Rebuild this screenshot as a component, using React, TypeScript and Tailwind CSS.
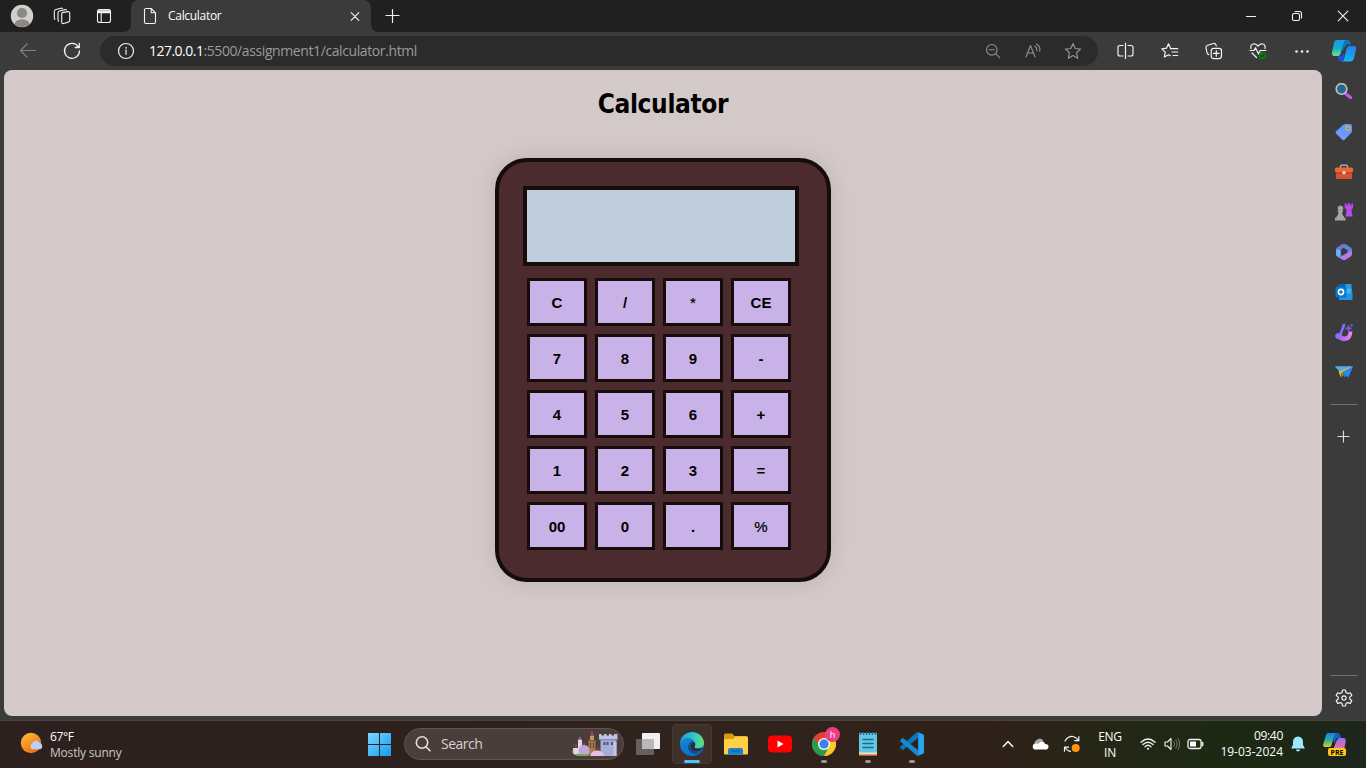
import React from 'react';

type Kids = { children?: React.ReactNode };

function Line({ children, w = 16, h = 16, color = '#f2f2f2', sw = 1.1 }: Kids & { w?: number; h?: number; color?: string; sw?: number }) {
  return (
    <svg width={w} height={h} viewBox={`0 0 ${w} ${h}`} fill="none" stroke={color} strokeWidth={sw} strokeLinecap="round" strokeLinejoin="round" className="block shrink-0">
      {children}
    </svg>
  );
}

function Pic({ children, s = 24 }: Kids & { s?: number }) {
  return (
    <svg width={s} height={s} viewBox={`0 0 ${s} ${s}`} className="block shrink-0">
      {children}
    </svg>
  );
}

const Slot44 = ({ children }: Kids) => <div className="flex h-full w-11 shrink-0 items-center justify-center">{children}</div>;
const Slot46 = ({ children }: Kids) => <div className="flex h-full w-[46px] shrink-0 items-center justify-center">{children}</div>;
const Slot40 = ({ children }: Kids) => <div className="flex h-full w-10 shrink-0 items-center justify-center">{children}</div>;
const SideSlot = ({ children }: Kids) => <div className="flex h-10 w-11 items-center justify-center">{children}</div>;

function TitleBar() {
  return (
    <div className="flex h-8 bg-[#202020]">
      <div className="flex w-11 items-center justify-center">
        <Pic s={24}>
          <defs><clipPath id="av"><circle cx="12" cy="12" r="11" /></clipPath></defs>
          <circle cx="12" cy="12" r="11.2" fill="#d2d0cc" />
          <g clipPath="url(#av)" fill="#8c8884"><circle cx="12" cy="9" r="5.1" /><ellipse cx="12" cy="20.5" rx="7.6" ry="5.3" /></g>
        </Pic>
      </div>
      <div className="flex w-9 items-center justify-center">
        <Line w={18} h={18}>
          <path d="M9.300 5.600 15 4.600q1.700-.200 1.700 1.500v7.200q0 1.500-1.400 1.800l-4.800 1.400q-1.800.500-1.800-1.400V7.200q0-1.300.600-1.600z" />
          <path d="M5.700 14.200q-.700-.500-.700-1.600V6q0-1.600 1.500-2L12 2.600q1-.200 1.500.300" />
          <path d="M2 12.300q-.700-.500-.700-1.600V4.500q0-1.600 1.500-2L8 1.200q1-.200 1.500.200" />
        </Line>
      </div>
      <div className="flex w-12 items-center justify-center">
        <Line w={16} h={16}>
          <rect x="1.5" y="1.5" width="13" height="13" rx="2" />
          <path d="M2 3.2h12M2 4.2h12" strokeWidth="2" /><path d="M5.2 5v9.3" />
        </Line>
      </div>
      <div className="relative ml-[3px] flex w-60 items-center rounded-t-lg bg-[#3b3b3b]">
        <svg className="absolute bottom-0 -left-2" width="8" height="8"><path d="M0 8Q8 8 8 0v8z" fill="#3b3b3b" /></svg>
        <svg className="absolute -right-2 bottom-0" width="8" height="8"><path d="M8 8Q0 8 0 0v8z" fill="#3b3b3b" /></svg>
        <div className="ml-3">
          <Line w={14} h={18}><path d="M3 1.5h5.2l4.3 4.3V15Q12.5 16.5 11 16.5H3Q1.5 16.5 1.5 15V3Q1.5 1.5 3 1.5zM8.2 1.5V5.8h4.3" /></Line>
        </div>
        <span className="ml-[11px] text-[12px] leading-4 tracking-[-0.3px] text-white">Calculator</span>
        <div className="mr-[11px] ml-auto"><Line w={10} h={10}><path d="m1.2 1.7 7.6 7.6m0-7.6-7.6 7.6" /></Line></div>
      </div>
      <div className="flex w-[42px] items-center justify-center"><Line w={16} h={16} sw={1.2}><path d="M8.500 1.500v13M2 7.500h13" /></Line></div>
      <div className="ml-auto flex">
        <Slot46><Line w={10} h={10}><path d="M0 5.5h10" /></Line></Slot46>
        <Slot46><Line w={12} h={12}><rect x="1.5" y="3.5" width="7" height="7" rx="1.5" /><path d="M4 1.5h4.5Q10.5 1.5 10.5 3.5V8" /></Line></Slot46>
        <Slot46><Line w={12} h={12}><path d="m1.2 1.2 9.6 9.6m0-9.6-9.6 9.6" /></Line></Slot46>
      </div>
    </div>
  );
}

function Toolbar() {
  return (
    <div className="flex h-[38px] items-center bg-[#3b3b3b]">
      <div className="ml-1.5 flex h-full">
        <Slot44><Line w={18} h={18} color="#828282"><path d="M16.5 8.500H1.500M8 2 1.500 8.500 8 15" /></Line></Slot44>
        <Slot44><Line w={18} h={18} sw={1.3}><path d="M15.300 4.800A7.500 7.500 0 1 0 16.500 9M16.300 1.500v4h-4" /></Line></Slot44>
      </div>
      <div className="ml-1.5 flex h-[30px] w-[998px] items-center rounded-full bg-[#2b2b2b]">
        <div className="ml-[17px]">
          <Line w={18} h={18} sw={1.2}><circle cx="9" cy="9" r="7.5" /><path d="M9 8.2v4" /><circle cx="9" cy="5.8" r=".3" /></Line>
        </div>
        <div className="ml-3.5 text-[14px] leading-5 tracking-[-0.4px] text-[#9b9b9b]"><span className="tracking-[-0.52px] text-white">127.0.0.1</span>:5500/assignment1/calculator.html</div>
        <div className="mr-[5px] ml-auto flex h-full">
          <Slot40><Line color="#929292"><circle cx="6.8" cy="6.8" r="5.3" /><path d="m10.8 10.8 4 4M4.3 6.8h5" /></Line></Slot40>
          <Slot40><Line color="#929292"><path d="m1 14 4.500-11.500L10 14M2.700 10h5.600M10 3.200Q12.200 4.800 11.800 8M11.500 1Q15.800 3.600 14.700 8.200" /></Line></Slot40>
          <Slot40><Line w={18} h={18} color="#929292" sw={1.2}><path d="m9 1.500 2.200 5 5.400.600-4 3.700 1.100 5.400L9 13.500l-4.700 2.700 1.100-5.400-4-3.700 5.400-.600z" /></Line></Slot40>
        </div>
      </div>
      <div className="ml-[6px] flex h-full">
        <Slot44><Line w={18} h={18} sw={1.2}><path d="M6 3.500H3Q1 3.500 1 5.500v6.500q0 2 2 2h3M11 3.500h3q2 0 2 2v6.500q0 2-2 2h-3M8.500 1v15.500" /></Line></Slot44>
        <Slot44><Line w={18} h={18} sw={1.2}><path d="M9.300 5.700 7.500 1.800l-2 4.400-4.700.600 3.500 3.300-1 5 4.200-2.400 1.800 1M9.500 6.700h7.200M11 10h5.700M12 13.500h4.700" /></Line></Slot44>
        <Slot44><Line w={18} h={18} sw={1.2}><rect x="6.200" y="6.300" width="10.300" height="10.300" rx="2.500" /><path d="M11.300 8.600v5.600M8.500 11.400h5.600M3.700 12.600Q2.300 12 2 10.700L1 5.800Q.700 3.900 2.600 3.300L8.500 1.500q1.900-.300 2.500 1.500l.300.900" /></Line></Slot44>
        <Slot44><Line w={18} h={18} sw={1.2}><path d="M2 6.500Q1.200 2.800 4.200 2 7 1.300 9 4.200 11 1.300 13.800 2q3 .800 2.200 4.500M1 8.500h4l1.500-2.800 3 6.200L11.200 8.500H17M3 11l4.500 4.500" /><circle cx="13.300" cy="13.600" r="3.600" fill="#107c10" stroke="none" /><path d="m11.800 13.600 1 1 2-2" stroke="#173b16" /></Line></Slot44>
        <Slot44><Line w={16} h={16}><g fill="#eee" stroke="none"><circle cx="2.500" cy="8.500" r="1.300" /><circle cx="8" cy="8.500" r="1.300" /><circle cx="13.500" cy="8.500" r="1.300" /></g></Line></Slot44>
        <div className="flex w-10 items-center justify-center"><Copilot /></div>
      </div>
    </div>
  );
}

function Copilot() {
  return (
    <Pic s={26}>
      <defs>
        <linearGradient id="cp1" x2="0" y2="1"><stop stopColor="#159ce9" /><stop offset=".5" stopColor="#12aeca" /><stop offset="1" stopColor="#6fe58a" /></linearGradient>
        <linearGradient id="cp2" x2="0" y2="1"><stop stopColor="#247df0" /><stop offset="1" stopColor="#12b9f0" /></linearGradient>
      </defs>
      <path d="M11.500 2H17q2.500 0 3 4.500h-4.500L11 14z" fill="#0878b7" />
      <path d="M6 2h9.500q-2.500.500-3.300 4L10 14q-.700 4-3 4H3.500Q.500 18 1 14L3 5Q3.700 2 6 2z" fill="url(#cp1)" />
      <path d="M18.500 8H23Q25.800 8 25 11.500L22.800 20.500q-.800 3-4 3H10q2.500 0 3.200-3L15.500 10.500Q16.200 8 18.500 8z" fill="url(#cp2)" />
      <path d="M6.500 18h4.200l1.300-3 1.800 2-.700 3.500q-.800 3-3.200 3Q7.500 23.500 6.500 18z" fill="#214fdb" />
    </Pic>
  );
}

function SideBar() {
  return (
    <div className="flex w-11 flex-col items-center bg-[#3b3b3b]">
      <div className="mt-[1.5px] flex flex-col">
        <SideSlot><Pic s={18}><path d="m11 11 4.500 3.500" stroke="#ca50ef" strokeWidth="3.400" strokeLinecap="round" /><circle cx="6.500" cy="6" r="5.300" fill="#25698b" stroke="#c6c6c6" strokeWidth="1.600" /></Pic></SideSlot>
        <SideSlot><Pic s={18}><defs><linearGradient id="tg" x2="0" y2="1"><stop stopColor="#5898ff" /><stop offset="1" stopColor="#8195ff" /></linearGradient></defs><path d="M10 1h5q2 0 2 2v5q0 1-.700 1.700L9.800 16.500q-1.300 1.300-2.600 0L1 10.500Q0 9.300 1.300 8L8.500 1.600Q9 1 10 1z" fill="url(#tg)" /><circle cx="12.700" cy="5.200" r="1.600" fill="#4755a5" stroke="#e6c51e" strokeWidth="1.500" /></Pic></SideSlot>
        <SideSlot><Pic s={18}><path d="M5.500 5V3.500q0-1.300 1.300-1.300h4.400q1.300 0 1.300 1.300V5" fill="none" stroke="#aaa9a7" strokeWidth="1.500" /><rect x="1" y="8" width="16" height="8" rx="1.300" fill="#d35431" /><rect x="0" y="4.500" width="18" height="5" rx="1" fill="#ef6335" /><path d="M1 10h16" stroke="#a53b27" /><circle cx="9" cy="9.800" r="1.700" fill="#ddd" /></Pic></SideSlot>
        <SideSlot><Pic s={18}><path d="M9.700.500h2v1.800h1.400V0h2v2.300h1.400V.500H18V5l-1.500 1.300.5 5.500q.8.500.8 1.700h-7.500q0-1.200.8-1.700l.3-5.500L9.700 5z" fill="#ba4bee" /><path d="M5.500 2.500a2.800 2.800 0 0 1 1.700 5H8v1.500H7q0 3 2 4.300v1.500h1.500v2.700H0v-2.700h1.500v-1.500q2-1.300 2-4.300H2.700V7.500h1a2.800 2.800 0 0 1 1.800-5z" fill="#a6a4a3" /></Pic></SideSlot>
        <SideSlot><Pic s={18}><path d="M7 1.500q2-1.200 4 0L15 4q2 1 2 3v4q-2.500 1-4.500-1V7L8 4.500 5.500 6V9q0 3 2.500 4.500l-3.500 1.500L3 14q-2-1-2-3V7q0-2 2-3z" fill="#4f8be6" /><path d="M7 1.500q2-1.200 4 0 1 1 0 2L6 6.500 5.500 10q-.500 3-3.500 3-1-1-1-2V7q0-2 2-3z" fill="#7872d8" /><path d="M5.500 7v3q0 3-2.500 4-2-1-2-3V7q2-1 4.500 0z" fill="#5cb9f0" /><path d="M17 8v3q0 2-2 3l-4 2.500q-2 1.200-4 0L3 14q2 0 4-1l5.500-3.500z" fill="#b47be2" /></Pic></SideSlot>
        <SideSlot><Pic s={18}><rect x="4.500" y="1" width="12" height="13" fill="#279bdd" /><path d="M4.500 1h6v5h-6z" fill="#0868ae" /><path d="M10.500 5.500h6v5h-6z" fill="#38b5f4" /><path d="m4 10 6.500 4L17.500 9v8H4z" fill="#2294da" /><rect x=".500" y="3.500" width="11" height="11" rx="1" fill="#0875ce" /><circle cx="6" cy="9" r="2.600" fill="none" stroke="#fff" strokeWidth="1.600" /></Pic></SideSlot>
        <SideSlot><Pic s={18}><defs><linearGradient id="br"><stop stopColor="#a950e5" /><stop offset="1" stopColor="#e88bfc" /></linearGradient></defs><path d="M1.500 12q1.500 6.500 8.500 6 7-.500 7.500-9.500h-4q0 4.500-3.500 5Q7.500 14 6 11z" fill="url(#br)" /><path d="m5 12.500 4-10.500" stroke="#7d70f7" strokeWidth="2.600" strokeLinecap="round" /><ellipse cx="3.500" cy="13" rx="3.300" ry="2.900" fill="#916cf4" /><path d="m13.500 2.500 1 2 2 .800-2 .800-1 2.200-1-2.200-2-.800 2-.800z" fill="#7657e7" stroke="#7657e7" /><path d="m16.800.500.500 1.200 1.200.500-1.200.500-.500 1.200-.500-1.200-1.200-.500 1.200-.500z" fill="#8a68f0" /></Pic></SideSlot>
        <SideSlot><Pic s={18}><path d="M0 3.500h18L6 10z" fill="#67c6fc" /><path d="M18 3.500 10 14.500 6 9.500z" fill="#2781dd" /><path d="M0 3.500h17L5.200 9z" fill="#48aeed" /><path d="m18 3.500-11.500 6L5.500 14 3.500 8.500z" fill="#efb923" /><path d="m18 3.500-4.500 11-6.500-5z" fill="#288bea" /><path d="M7 9.500 5.500 15l3-3z" fill="#a9821c" /></Pic></SideSlot>
      </div>
      <div className="mt-[12.5px] h-px w-7 bg-[#707070]" />
      <div className="mt-[25px]"><Line w={14} h={14} color="#ddd"><path d="M6.500 1v11M1 6.500h11" /></Line></div>
      <div className="mt-auto h-px w-7 bg-[#707070]" />
      <div className="mt-[13px] mb-[13px]"><Line w={18} h={18} sw={1.2}><path d="M7.500 1h3l.5 2.600 1.800 1 2.500-.8 1.500 2.600-2 1.700v2l2 1.700-1.500 2.600-2.500-.8-1.800 1L10.500 17h-3L7 14.600l-1.800-1-2.500.8-1.500-2.600 2-1.700v-2l-2-1.700 1.500-2.600 2.500.8 1.800-1z" /><circle cx="9" cy="9" r="2.100" /></Line></div>
    </div>
  );
}

const keys = ['C', '/', '*', 'CE', '7', '8', '9', '-', '4', '5', '6', '+', '1', '2', '3', '=', '00', '0', '.', '%'];

function Calculator() {
  return (
    <main className="ml-1 flex h-[646px] w-[1318px] flex-col items-center rounded-lg bg-[#d3c9c8]">
      <h1 className="mt-4 h-9 font-['DejaVu_Sans_Condensed','DejaVu_Sans',sans-serif] text-[26px] leading-9 font-bold tracking-[-0.35px] text-black [font-stretch:condensed]">Calculator</h1>
      <section className="mt-9 h-[424px] w-[336px] rounded-[32px] border-4 border-[#160c0b] bg-[#4b2b2d] p-6 shadow-[0_0_20px_rgba(0,0,0,0.12)]">
        <div className="h-20 w-[276px] border-4 border-[#160c0b] bg-[#c0cddb]" />
        <div className="mt-3 ml-1 grid w-[264px] grid-cols-4 gap-2">
          {keys.map((k) => (
            <button key={k} className={`flex h-12 w-[60px] items-center justify-center border-[3px] border-[#160c0b] bg-[#c9b2e8] pt-0.5 font-['Liberation_Sans',sans-serif] text-[15px] leading-4 text-black ${k === '*' || k === '%' ? 'font-normal [-webkit-text-stroke:0.2px_black]' : 'font-bold'}`}>{k}</button>
          ))}
        </div>
      </section>
    </main>
  );
}

function AppIcon({ children, dot = false, active = false }: Kids & { dot?: boolean; active?: boolean }) {
  return (
    <Slot44>
      <div className={active ? 'relative flex h-10 w-10 items-center justify-center rounded-[4px] border border-[#493a34] bg-[#3e302a]' : 'relative flex h-10 w-10 items-center justify-center'}>
        {children}
        {dot && <span className="absolute bottom-px left-[17px] h-[3px] w-1.5 rounded-full bg-[#9c9490]" />}
        {active && <span className="absolute bottom-0 left-[11px] h-[3px] w-4 rounded-full bg-[#4cc2ff]" />}
      </div>
    </Slot44>
  );
}

function SearchCastle() {
  return (
    <svg width="48" height="26" viewBox="0 0 48 26" className="block">
      <ellipse cx="11" cy="21" rx="10.5" ry="4" fill="#638746" />
      <path d="M2 17h6v7H4q-2-1-2-7zM7 9h4v12H7z" fill="#ddd8ed" /><path d="m7 9 2-3 2 3z" fill="#8296c8" /><path d="M9 5.500v3M5 13.500v3" stroke="#e43255" strokeWidth="1.300" />
      <path d="M17.500 9h7v13h-7z" fill="#a97d43" /><path d="M19 4.500h4V10h-4z" fill="#c79757" /><path d="m18.500 5 2.500-3.500L23.500 5zM16.500 10.500l2-1.500h5l2 1.500z" fill="#805653" /><path d="M21 0v3M13 12v3M27 16.500v3" stroke="#e43255" strokeWidth="1.300" /><path d="M19.500 12v5m3-5v5" stroke="#624253" strokeWidth="1.200" />
      <path d="M7.500 20q0-6 5.500-6t5.500 6v3h-11z" fill="#bda7db" />
      <path d="M29.500 7.500h16V25h-16z" fill="#a7add6" /><path d="M28 3h2.500v1.500H33V3h2.500v1.500H38V3h2.500v1.500H43V3h3.500v5.500H28z" fill="#bfc3e3" /><path d="M28.500 8.800h18" stroke="#747bae" /><path d="M32.500 11h2v3h-2zm3 0h2v3h-2zm4.500 0h2v3h-2z" fill="#44548c" /><path d="M42.500 11h3v14h-3z" fill="#c9bfe7" />
      <path d="M19 25q1-5.500 7-5.500T33 25z" fill="#e6c0e2" /><path d="M3 23h15v2H6z" fill="#7aa754" />
    </svg>
  );
}

function TaskBar() {
  return (
    <div className="flex h-12 items-center border-t border-[#4c413a] bg-[linear-gradient(90deg,#2c211e_0%,#30221d_50%,#30211a_72%,#212815_84%,#1c2912_91%,#1e261d_100%)] pb-px text-white">
      <div className="ml-5 flex w-[336px] items-center">
        <Pic s={24}>
          <defs><linearGradient id="sun" x2=".7" y2="1"><stop stopColor="#f8c436" /><stop offset="1" stopColor="#f36b12" /></linearGradient></defs>
          <circle cx="11" cy="11" r="10.2" fill="url(#sun)" /><path d="M12 17.200a3.300 3.300 0 0 1 0-5.700 4 4 0 0 1 7.500-.500 3.300 3.300 0 0 1 1 6.200z" fill="#b9d0fa" />
        </Pic>
        <div className="ml-1.5 flex flex-col pt-0.5 text-[12px] leading-4"><span className="tracking-[-0.4px]">67°F</span><span className="tracking-[-0.2px] text-[#cbc6c4]">Mostly sunny</span></div>
      </div>
      <div className="ml-[11px]"><Pic s={25}><defs><linearGradient id="wn" x2="1" y2="1"><stop stopColor="#78d8ff" /><stop offset="1" stopColor="#129bf4" /></linearGradient></defs><path d="M1 1h11v11H1zM13 1h11v11H13zM1 13h11v11H1zM13 13h11v11H13z" fill="url(#wn)" /></Pic></div>
      <div className="ml-3 flex h-8 w-[220px] items-center rounded-full border border-[#62534e] bg-[#493e3a]">
        <div className="ml-2.5"><Line w={18} h={18} color="#e4e1df" sw={1.6}><circle cx="7" cy="7.500" r="5.700" /><path d="m11 11.800 4 4" /></Line></div>
        <span className="ml-2 text-[14px] leading-5 tracking-[-0.5px] text-[#d7d2d0]">Search</span>
        <div className="mr-1 ml-auto"><SearchCastle /></div>
      </div>
      <div className="ml-0.5 flex h-full items-center">
        <AppIcon><Pic s={26}><rect x="7" y="2" width="18" height="16" rx="1" fill="#f0f0f0" /><rect x="1" y="8" width="18" height="16" rx="1" fill="#666160" /><path d="M7 8h12v10H7z" fill="#b9b8b8" /></Pic></AppIcon>
        <AppIcon active><Pic s={24}><defs><linearGradient id="ed" y2="1" x2=".2"><stop stopColor="#208bc8" /><stop offset="1" stopColor="#0872d0" /></linearGradient><linearGradient id="eg"><stop stopColor="#209bdb" /><stop offset=".6" stopColor="#2dc9c9" /><stop offset="1" stopColor="#68e55e" /></linearGradient></defs><circle cx="12" cy="12" r="12" fill="url(#ed)" /><path d="M0 11C1-1 18-4 23 7q3 7-3 9-5 1-6-1 2-2 1-4C12 4 4 5 0 11z" fill="url(#eg)" /><path d="M14.500 10.500q1.500 3-.500 4.500 1 3 8.500 1.600Q20 21 15 22 9 21 8 16q0-5 4-7 1.500 0 2.500 1.500z" fill="#114d91" /><path d="M14.500 10.500q1.500 3-.500 4.500 1 2.700 7 1l1.500.600q-5 4-10 1.400-3-3-1-6 1-1 3-1.500z" fill="#37271f" /></Pic></AppIcon>
        <AppIcon><Pic s={24}><path d="M0 3q0-1.500 1.500-1.500H8l2.500 2.500H22q2 0 2 2v10H0z" fill="#d99c09" /><path d="M0 7h9l2-2.500h11.500Q24 4.500 24 6v15.500q0 1-1 1H1q-1 0-1-1z" fill="#ffcf46" /><path d="M4 22.500V18q0-2 2-2h11q2 0 2 2v4.500z" fill="#1683d2" /><path d="M7.500 19h8" stroke="#0860a2" strokeWidth="1.200" /></Pic></AppIcon>
        <AppIcon><Pic s={24}><rect y="3.500" width="24" height="17" rx="4" fill="#f00" /><path d="m9.500 8.500 6 3.500-6 3.500z" fill="#fff" /></Pic></AppIcon>
        <AppIcon dot>
          <Pic s={24}><circle cx="12" cy="12" r="12" fill="#e44133" /><path d="M1.600 6A12 12 0 0 0 12 24l5-9-5 1.500-4.500-3z" fill="#269c4d" /><path d="M22.400 6A12 12 0 0 1 12 24l5-9V6z" fill="#f9cc23" /><circle cx="12" cy="12" r="6" fill="#fff" /><circle cx="12" cy="12" r="4.700" fill="#3e82ef" /></Pic>
          <span className="absolute top-[3px] left-[21px] flex h-[15px] w-[15px] items-center justify-center rounded-full bg-[#ed3e80] text-[9px] leading-none">h</span>
        </AppIcon>
        <AppIcon dot><Pic s={24}><path d="M3 1h18v22H3z" fill="#64c6df" /><path d="M3 20.500h18v3H3z" fill="#e7e2d7" /><path d="M3 22.500h18V24H3z" fill="#c85d13" /><path d="M4.500 0v3M7.500 0v3M10.500 0v3M13.500 0v3M16.500 0v3M19.500 0v3" stroke="#126d98" strokeWidth="1.300" /><path d="M6.500 7.500h11m-11 4h11m-11 4h11" stroke="#087398" strokeWidth="1.700" /></Pic></AppIcon>
        <AppIcon dot><Pic s={24}><path d="M18 0v6L3 18q-1 0-2.800-2.200Q0 15 .5 14.600L16 1z" fill="#0877b9" /><path d="m18 24v-6L3 6q-1 0-2.800 2.200Q0 9 .5 9.400L16 23z" fill="#1688ce" /><path d="m17.500 0 5.500 2.200q1 .5 1 1.500v16.600q0 1-1 1.500L17.500 24q.7-.5.7-1.500v-21Q18.200.5 17.500 0z" fill="#27a5f2" /></Pic></AppIcon>
      </div>
      <div className="ml-[58px] flex h-full items-center">
        <div className="flex w-8 shrink-0 justify-center"><Line w={14} h={10} sw={1.6}><path d="m2.300 7.500 4.700-5 4.700 5" /></Line></div>
        <div className="flex w-8 shrink-0 justify-center"><Line w={18} h={14}><path d="M3.500 7.500Q3 4.500 5.500 3 10-.5 12.500 4l-6 4.500z" fill="#aaa6a2" stroke="none" /><path d="M3.500 12.500A3.200 3.200 0 0 1 4 6.500L7 6.700l3-2q3-1 4.300 2.300 3.200.200 3.200 2.700-.200 2.800-3 2.800z" fill="#fff" stroke="none" /></Line></div>
        <div className="flex w-8 shrink-0 justify-center"><Line w={18} h={18} sw={1.2}><path d="M2 6Q5 1 10 1.500q3 .5 5.500 4M15.800 1.500v4.200h-4M1.500 12.200h4.200M1.500 12.200v4M2 12.300Q4 16 7.500 16.300" /><circle cx="12.700" cy="13" r="4" fill="#ff940b" stroke="none" /></Line></div>
        <div className="flex w-11 shrink-0 flex-col items-center pt-0.5 text-[12px] leading-4 tracking-[-0.3px]"><span>ENG</span><span>IN</span></div>
        <div className="ml-2"><Line w={16} h={14} sw={1.4}><path d="M1 5.200Q8-1.200 15 5.200M3 7.500q5-4.700 10 0M5.100 9.700q2.900-2.800 5.800 0" /><circle cx="8" cy="11.700" r="1" fill="#fff" stroke="none" /></Line></div>
        <div className="ml-2"><Line w={16} h={14}><path d="M1 5v4h2.500L7 12.500v-11L3.500 5z" /><g stroke="#626d5d"><path d="M9.500 4.500q2 2.500 0 5M11.700 3q3 4 0 8M13.800 1.500q4 5.500 0 11" /></g></Line></div>
        <div className="ml-[7px]"><Line w={17} h={14} sw={1.3}><rect x="1" y="2.500" width="13" height="9" rx="2" /><rect x="3" y="4.500" width="6" height="5" rx=".5" fill="#fff" stroke="none" /><path d="M15.500 5.500v3" strokeWidth="1.700" /></Line></div>
        <div className="flex w-[79px] shrink-0 flex-col items-end text-[12px] leading-4"><span className="tracking-[-0.3px]">09:40</span><span>19-03-2024</span></div>
        <div className="ml-[7px]"><Pic s={16}><path d="M1.500 11.500 3 9V6q0-5 5-5.500 5 .5 5 5.500v3l1.500 2.500v1H1.500zM6 13.500h4q0 2-2 2t-2-2z" fill="#9ce8ff" /></Pic></div>
        <div className="relative ml-4 flex">
          <svg width="26" height="24" viewBox="0 0 26 24"><defs><linearGradient id="pg" x2="0" y2="1"><stop stopColor="#197fe8" /><stop offset=".5" stopColor="#24aca7" /><stop offset="1" stopColor="#eacc16" /></linearGradient><linearGradient id="pp" x2="0" y2="1"><stop stopColor="#9b68f4" /><stop offset="1" stopColor="#fa7785" /></linearGradient></defs><path d="M11 1h5q2 0 3 5h-4l-3 6z" fill="#155bc1" /><path d="M6 1h9q-2 .5-2.700 3L9.500 13q-.5 2-2 2H3Q.5 15 1.300 12L4 3q.5-2 2-2z" fill="url(#pg)" /><path d="M17.500 6h4q2.500 0 2.300 3.500L21.500 20H10l4.500-11q1-3 3-3z" fill="url(#pp)" /></svg>
          <span className="absolute top-4 left-1.5 flex h-2 w-[18px] items-center justify-center rounded-[2px] bg-[#ffc914] text-[7px] leading-none font-bold text-black">PRE</span>
        </div>
      </div>
    </div>
  );
}

export default function App() {
  return (
    <div className="flex h-[768px] w-[1366px] flex-col overflow-hidden bg-[#3b3b3b] font-['Open_Sans','Noto_Sans',sans-serif]">
      <TitleBar />
      <Toolbar />
      <div className="flex h-[650px]">
        <Calculator />
        <SideBar />
      </div>
      <TaskBar />
    </div>
  );
}
